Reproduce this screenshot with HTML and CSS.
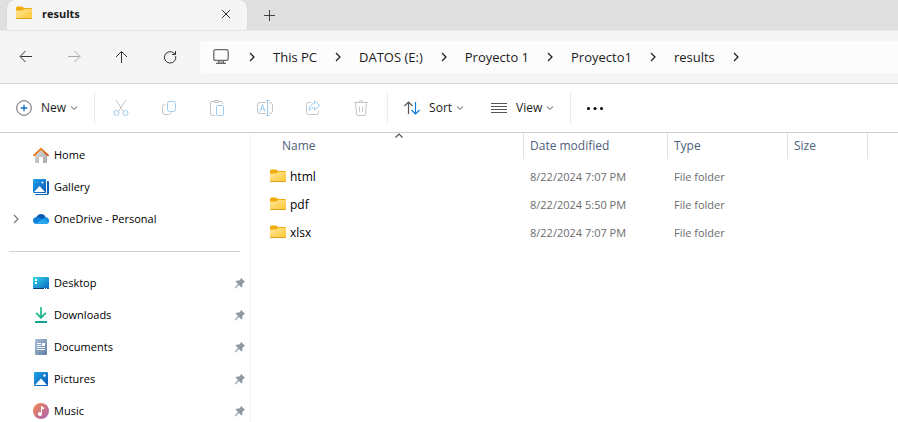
FILE: index.html
```html
<!DOCTYPE html>
<html lang="en">
<head>
<meta charset="utf-8">
<title>results</title>
<link rel="stylesheet" href="styles.css">
</head>
<body>
<svg class="defs" aria-hidden="true">
  <defs>
    <linearGradient id="g-folder" x1="0" y1="0" x2="1" y2="1"><stop offset="0" stop-color="#ffe79c"/><stop offset="1" stop-color="#fdc62f"/></linearGradient>
    <linearGradient id="g-blue" x1="0" y1="0" x2="1" y2="1"><stop offset="0" stop-color="#1fa5ea"/><stop offset="1" stop-color="#0a56b4"/></linearGradient>
    <linearGradient id="g-desk" x1="0" y1="0" x2="1" y2="1"><stop offset="0" stop-color="#35dcec"/><stop offset="1" stop-color="#0b62bd"/></linearGradient>
    <linearGradient id="g-wall" x1="0" y1="0" x2="1" y2="1"><stop offset="0" stop-color="#e0e0e0"/><stop offset="1" stop-color="#a6a6a6"/></linearGradient>
    <linearGradient id="g-roof" x1="0" y1="0" x2="1" y2="1"><stop offset="0" stop-color="#f59a2a"/><stop offset="1" stop-color="#d04a08"/></linearGradient>
    <linearGradient id="g-down" x1="0" y1="0" x2="0" y2="1"><stop offset="0" stop-color="#35cf86"/><stop offset="1" stop-color="#0e9e94"/></linearGradient>
    <linearGradient id="g-doc" x1="0" y1="0" x2="1" y2="1"><stop offset="0" stop-color="#a9bfd6"/><stop offset="1" stop-color="#5f7fa6"/></linearGradient>
    <linearGradient id="g-music" x1="0" y1="0" x2="1" y2="1"><stop offset="0" stop-color="#f58b4c"/><stop offset="1" stop-color="#a85fb8"/></linearGradient>
    <symbol id="folder" viewBox="0 0 16 16"><path d="M0 2Q0 .5 1.500 .5H6L8 2H15Q16 2 16 3V6H0Z" fill="#f0ab0d"/><path d="M0 4.500H6.500L8 3H16V12Q16 13 15 13H1Q0 13 0 12Z" fill="url(#g-folder)"/><path d="M0 12Q0 13 1 13H15Q16 13 16 12Z" fill="#e0a01c"/></symbol>
    <symbol id="chev-r" viewBox="0 0 8 10"><path d="M2 1L6 5L2 9" fill="none" stroke="currentColor" stroke-width="1.200"/></symbol>
    <symbol id="chev-d" viewBox="0 0 8 8"><path d="M1 2.500L4 5.500L7 2.500" fill="none" stroke="#9a9a9a" stroke-width="1.200"/></symbol>
    <symbol id="pin" viewBox="0 0 12 12"><path d="M7.200 1L11 4.800L9.800 5.500L8.500 6.800L8.400 9.500L7.400 10.500L5 8L1.200 11.600L.5 11L4 7L1.500 4.600L2.500 3.700L5.200 3.500L6.500 2.200Z" fill="#8e9aa3"/></symbol>
  </defs>
</svg>

<div class="window">
  <header class="tabs">
    <div class="tab">
      <svg class="icon"><use href="#folder"/></svg>
      <span class="tab-title">results</span>
      <button class="close" aria-label="Close tab"><svg width="10" height="10" viewBox="0 0 10 10"><path d="M1 1L9 9M9 1L1 9" fill="none" stroke="#333"/></svg></button>
    </div>
    <button class="add" aria-label="New tab"><svg width="12" height="12" viewBox="0 0 12 12"><path d="M6.500 1V12M1 6.500H12" fill="none" stroke="#444"/></svg></button>
  </header>

  <nav class="navbar" aria-label="Navigation">
    <button class="nav-btn" aria-label="Back"><svg class="icon" viewBox="0 0 16 16"><path d="M14 7.500H2.500M7.500 2L2 7.500L7.500 13"/></svg></button>
    <button class="nav-btn off" aria-label="Forward"><svg class="icon" viewBox="0 0 16 16"><path d="M2 7.500H13.500M8.500 2L14 7.500L8.500 13"/></svg></button>
    <button class="nav-btn" aria-label="Up"><svg class="icon" viewBox="0 0 16 16"><path d="M7.500 14V2.500M2 8L7.500 2.500L13 8"/></svg></button>
    <button class="nav-btn" aria-label="Refresh"><svg class="icon" viewBox="0 0 16 16"><path d="M13.700 7.200A5.700 5.700 0 1 1 11.800 4L13.500 5.500M13.500 2V5.500H10"/></svg></button>
    <div class="address">
      <svg class="icon place" viewBox="0 0 16 16"><path d="M2.500 .7H13.500Q15.200 .7 15.200 2.500V9.700Q15.200 11.400 13.500 11.400H2.500Q.8 11.400 .8 9.700V2.500Q.8 .7 2.500 .7Z" fill="none" stroke="#6a6a6a" stroke-width="1.300"/><path d="M6 12H10V14H6Z" fill="#b5b5b5"/><path d="M5.500 12V14.300M10.500 12V14.300M3 14.300H13" stroke="#6a6a6a" stroke-width="1.200"/></svg>
      <svg class="sep"><use href="#chev-r"/></svg><a href="#">This PC</a>
      <svg class="sep"><use href="#chev-r"/></svg><a href="#">DATOS (E:)</a>
      <svg class="sep"><use href="#chev-r"/></svg><a href="#">Proyecto 1</a>
      <svg class="sep"><use href="#chev-r"/></svg><a href="#">Proyecto1</a>
      <svg class="sep"><use href="#chev-r"/></svg><a href="#">results</a>
      <svg class="sep"><use href="#chev-r"/></svg>
    </div>
  </nav>

  <div class="toolbar" role="toolbar" aria-label="Commands">
    <div class="group">
      <button class="cmd"><svg class="icon" viewBox="0 0 16 16"><circle cx="8" cy="8" r="7.300" fill="none" stroke="#666"/><path d="M8 4.700V11.300M4.700 8H11.300" stroke="#0f6cbd" stroke-width="1.300"/></svg><span>New</span><svg class="down"><use href="#chev-d"/></svg></button>
    </div>
    <div class="group tools">
      <button class="tool" aria-label="Cut"><svg class="icon" viewBox="0 0 16 16"><path class="gr" d="M3 0L10.300 11M13 0L5.700 11"/><circle class="bl" cx="3.500" cy="13" r="2.500"/><circle class="bl" cx="12.500" cy="13" r="2.500"/></svg></button>
      <button class="tool" aria-label="Copy"><svg class="icon" viewBox="0 0 16 16"><path class="gr" d="M4.500 4.500H3.500Q1.500 4.500 1.500 6.500V12Q1.500 14.500 4 14.500H7.500Q9.500 14.500 10 12.500"/><rect class="bl" x="6.500" y="1.500" width="8" height="10" rx="2"/></svg></button>
      <button class="tool" aria-label="Paste"><svg class="icon" viewBox="0 0 16 16"><path class="gr" d="M6 15.500H3Q1.500 15.500 1.500 14V3Q1.500 1.500 3 1.500H5M10 1.500H11.500Q13.500 1.500 13.500 3V4M5.500 .5H9.500V2.500H5.500Z"/><rect class="bl" x="7.500" y="5.500" width="7" height="10" rx="1"/></svg></button>
      <button class="tool" aria-label="Rename"><svg class="icon" viewBox="0 0 16 16"><path class="gr" d="M9 13.500H3Q.5 13.500 .5 11V5Q.5 2.500 3 2.500H9M12.500 2.500Q15.500 2.500 15.500 5V11Q15.500 13.500 12.500 13.500"/><path class="bl" d="M8.500 .5H12.500M8.500 15.500H12.500M10.500 .5V15.500M3 11.500L5.500 4.500L8 11.500M4 9H7"/></svg></button>
      <button class="tool" aria-label="Share"><svg class="icon" viewBox="0 0 16 16"><path class="gr" d="M6 2.500H3.500Q1.500 2.500 1.500 4.500V12.500Q1.500 14.500 3.500 14.500H11.500Q13.500 14.500 13.500 12.500V11"/><path class="bl" d="M9.500 1L14.700 5.500L9.500 10V7.500Q6 7.500 4 10.500Q4.500 4 9.500 3.600Z"/></svg></button>
      <button class="tool" aria-label="Delete"><svg class="icon" viewBox="0 0 16 16"><path class="gr" d="M1 2.500H15M6 2.500Q6 .5 8 .5Q10 .5 10 2.500M2.500 2.500L3.500 14Q3.600 15.500 5 15.500H11Q12.400 15.500 12.500 14L13.500 2.500M6.500 6.500V11.500M9.500 6.500V11.500"/></svg></button>
    </div>
    <div class="group sorts">
      <button class="cmd"><svg class="icon" viewBox="0 0 16 16"><path d="M4.500 14V2M.5 6L4.500 2L8.500 6" fill="none" stroke="#555" stroke-width="1.200"/><path d="M11.500 2V14M7.500 10L11.500 14L15.500 10" fill="none" stroke="#0f7bd6" stroke-width="1.200"/></svg><span>Sort</span><svg class="down"><use href="#chev-d"/></svg></button>
      <button class="cmd"><svg class="icon" viewBox="0 0 16 16"><path d="M0 3.500H16M0 6.500H16M0 9.500H16M0 12.500H16" stroke="#555"/></svg><span>View</span><svg class="down"><use href="#chev-d"/></svg></button>
    </div>
    <button class="more" aria-label="See more"><svg class="icon" viewBox="0 0 16 16"><circle cx="1.500" cy="8.500" r="1.500"/><circle cx="8" cy="8.500" r="1.500"/><circle cx="14.500" cy="8.500" r="1.500"/></svg></button>
  </div>

  <div class="content">
    <aside class="sidebar">
      <ul>
        <li><a href="#"><span class="twist"></span><svg class="icon" viewBox="0 0 16 16"><path d="M2 7L8 2L14 7V15Q14 16 13 16H10V10H6V16H3Q2 16 2 15Z" fill="url(#g-wall)"/><path d="M1 8.300L8 1.800L15 8.300" fill="none" stroke="url(#g-roof)" stroke-width="1.800" stroke-linecap="round"/></svg><span class="label">Home</span></a></li>
        <li><a href="#"><span class="twist"></span><svg class="icon" viewBox="0 0 16 16"><path d="M14 2H15Q16 2 16 3V14Q16 16 14 16H3Q2 16 2 15V14H13Q14 14 14 13Z" fill="#0f63b8"/><rect width="14" height="15" rx="1" fill="#fff"/><rect width="13" height="14" rx="1" fill="url(#g-blue)"/><path d="M1 13L6.500 7L12 13Z" fill="#fff"/><circle cx="9.500" cy="3.500" r="1" fill="#fff"/></svg><span class="label">Gallery</span></a></li>
        <li><a href="#"><svg class="twist"><use href="#chev-r"/></svg><svg class="icon" viewBox="0 0 16 16"><path d="M3.300 6Q5 3 8 3Q11.500 3 12.600 6.200L13 9H4Z" fill="#0a5ab4"/><path d="M3.300 6Q5.500 5.500 10 8.500L4 13Q0 13 0 9.500Q0 6.500 3.300 6Z" fill="#0f80dc"/><path d="M9 8.500Q11 6 13 6.200Q16 6.500 16 10Q16 13 13 13H9Z" fill="#1490df"/><path d="M2.500 12.700L9.500 8.500L15.500 11.500Q14.800 13 13 13H4Z" fill="#29a8ee"/></svg><span class="label">OneDrive - Personal</span></a></li>
      </ul>
      <hr>
      <ul>
        <li><a href="#"><span class="twist"></span><svg class="icon" viewBox="0 0 16 16"><rect y="2" width="16" height="12" rx="1" fill="url(#g-desk)"/><path d="M0 13H16Q16 14 15 14H1Q0 14 0 13Z" fill="#0a3f73"/><path d="M2 4H4V6H2ZM2 7H4V9H2ZM11 13H12V14H11ZM13 13H14V14H13Z" fill="#fff"/></svg><span class="label">Desktop</span><svg class="pin"><use href="#pin"/></svg></a></li>
        <li><a href="#"><span class="twist"></span><svg class="icon" viewBox="0 0 16 16"><path d="M7.100 0H8.900V8.500L12.300 5.200L13.500 6.400L8 12L2.500 6.400L3.700 5.200L7.100 8.500ZM2 14H14V16H2Z" fill="url(#g-down)"/></svg><span class="label">Downloads</span><svg class="pin"><use href="#pin"/></svg></a></li>
        <li><a href="#"><span class="twist"></span><svg class="icon" viewBox="0 0 16 16"><rect x="2" width="12" height="16" rx="1" fill="url(#g-doc)"/><path d="M4 4H8V5H4ZM9 4H12V7H9ZM4 6H8V7H4ZM4 8H12V9H4ZM4 10H12V11H4Z" fill="#fff"/></svg><span class="label">Documents</span><svg class="pin"><use href="#pin"/></svg></a></li>
        <li><a href="#"><span class="twist"></span><svg class="icon" viewBox="0 0 16 16"><rect x="1" y="1" width="14" height="14" rx="1" fill="url(#g-blue)"/><path d="M2 14L8 7.500L14 14Z" fill="#fff"/><circle cx="11.500" cy="4.500" r="1.200" fill="#fff"/></svg><span class="label">Pictures</span><svg class="pin"><use href="#pin"/></svg></a></li>
        <li><a href="#"><span class="twist"></span><svg class="icon" viewBox="0 0 16 16"><circle cx="8" cy="8" r="8" fill="url(#g-music)"/><path d="M8 3L11 4.500V6.500L9 5.700V11A2 2 0 1 1 8 9.300Z" fill="#fff"/></svg><span class="label">Music</span><svg class="pin"><use href="#pin"/></svg></a></li>
      </ul>
    </aside>
    <main class="files">
      <table>
        <colgroup><col class="c-name"><col class="c-date"><col class="c-type"><col class="c-size"><col></colgroup>
        <thead>
          <tr><th aria-sort="ascending">Name<svg class="sorted" viewBox="0 0 8 5"><path d="M.5 4.500L4 1L7.500 4.500" fill="none" stroke="#555" stroke-width="1.200"/></svg></th><th>Date modified</th><th>Type</th><th>Size</th><td></td></tr>
        </thead>
        <tbody>
          <tr><td><div class="file"><svg class="icon"><use href="#folder"/></svg>html</div></td><td>8/22/2024 7:07 PM</td><td>File folder</td><td></td><td></td></tr>
          <tr><td><div class="file"><svg class="icon"><use href="#folder"/></svg>pdf</div></td><td>8/22/2024 5:50 PM</td><td>File folder</td><td></td><td></td></tr>
          <tr><td><div class="file"><svg class="icon"><use href="#folder"/></svg>xlsx</div></td><td>8/22/2024 7:07 PM</td><td>File folder</td><td></td><td></td></tr>
        </tbody>
      </table>
    </main>
  </div>
</div>
</body>
</html>
```
FILE: styles.css
```css
* {
  box-sizing: border-box;
}

body {
  margin: 0;
  font: 12px/16px "Open Sans", "Noto Sans", sans-serif;
  color: #000;
  background: #fff;
}

button {
  display: flex;
  align-items: center;
  justify-content: center;
  padding: 0;
  border: 0;
  background: none;
  font: inherit;
  color: #1b1b1b;
}

a {
  color: inherit;
  text-decoration: none;
}

svg {
  display: block;
  flex: none;
}

.defs {
  position: absolute;
  width: 0;
  height: 0;
}

.icon {
  width: 16px;
  height: 16px;
}

.window {
  display: flex;
  flex-direction: column;
  height: 100vh;
  overflow: hidden;
}

/* Tab strip */
.tabs {
  display: flex;
  flex: none;
  height: 31px;
  padding-left: 7px;
  background: #e0e0e0;
  border-bottom: 1px solid #e9e9e9;
}

.tab {
  display: flex;
  align-items: center;
  gap: 10px;
  width: 240px;
  padding: 0 16px 2px 9px;
  background: #f5f5f5;
  border-radius: 8px 8px 0 0;
  box-shadow: 0 0 1px #bbb;
}

.tab-title {
  flex: 1;
  font-size: 11px;
  font-weight: 700;
  color: #1b1b1b;
}

.add {
  width: 44px;
}

/* Navigation row */
.navbar {
  display: flex;
  flex: none;
  padding: 10px 0 10px 2px;
  background: #f5f5f5;
  border-bottom: 1px solid #d8d8d8;
}

.nav-btn {
  width: 48px;
  height: 32px;
}

.nav-btn path {
  fill: none;
  stroke: #333;
}

.nav-btn.off path {
  stroke: #a8a8a8;
}

.address {
  display: flex;
  flex: 1;
  align-items: center;
  gap: 17px;
  margin-left: 6px;
  padding-left: 13px;
  background: #fcfcfc;
  border-radius: 4px 0 0 4px;
  font-size: 13px;
  color: #1b1b1b;
  white-space: nowrap;
}

.place {
  margin-right: 2px;
}

.sep {
  width: 8px;
  height: 10px;
}

/* Command bar */
.toolbar {
  display: flex;
  flex: none;
  align-items: center;
  padding: 8px 0;
  border-bottom: 1px solid #cfcfcf;
}

.group {
  display: flex;
  height: 32px;
  border-right: 1px solid #ebebeb;
}

.group:first-child {
  padding: 0 16px;
}

.cmd span {
  margin: 0 4px 0 9px;
}

.down {
  width: 8px;
  height: 8px;
}

.tools {
  padding: 0 2px;
}

.tool {
  width: 48px;
}

.gr,
.bl {
  fill: none;
  stroke: #c4c4c4;
}

.bl {
  stroke: #9ccbef;
}

.sorts {
  gap: 27px;
  padding: 0 16px;
}

.more {
  width: 48px;
  height: 32px;
}

/* Panes */
.content {
  display: flex;
  flex: 1;
  min-height: 0;
}

.sidebar {
  flex: none;
  width: 251px;
  padding-top: 6px;
  border-right: 1px solid #f2f2f2;
  font-size: 11px;
  overflow: hidden;
}

.sidebar ul {
  margin: 0;
  padding: 0;
  list-style: none;
}

.sidebar li a {
  display: flex;
  align-items: center;
  height: 32px;
  padding: 0 4px 0 12px;
}

.twist {
  width: 8px;
  height: 10px;
  margin-right: 13px;
  color: #777;
}

.label {
  flex: 1;
  margin-left: 5px;
}

.pin {
  width: 12px;
  height: 12px;
}

.sidebar hr {
  height: 1px;
  margin: 16px 10px 15px 9px;
  border: 0;
  background: #d0d0d0;
}

.files {
  flex: 1;
  min-width: 0;
}

table {
  width: 100%;
  table-layout: fixed;
  border-collapse: separate;
  border-spacing: 0;
}

.c-name {
  width: 273px;
}

.c-date {
  width: 144px;
}

.c-type {
  width: 120px;
}

.c-size {
  width: 80px;
}

th {
  position: relative;
  height: 26px;
  padding: 0 0 0 6px;
  border-right: 1px solid #e2e2e2;
  font-weight: 400;
  text-align: left;
  color: #4c607a;
}

th:first-child {
  padding-left: 31px;
}

.sorted {
  position: absolute;
  top: 0;
  right: 7px;
  left: 31px;
  width: 8px;
  height: 5px;
  margin: 0 auto;
}

tbody::before {
  content: "";
  display: block;
  height: 4px;
}

td {
  padding: 0 0 0 6px;
  color: #6d6d6d;
}

tbody td {
  height: 28px;
  font-size: 11px;
}

tbody td:first-child {
  padding-left: 19px;
  font-size: 12px;
  color: #000;
}

.file {
  display: flex;
  align-items: center;
  gap: 4px;
}
```
